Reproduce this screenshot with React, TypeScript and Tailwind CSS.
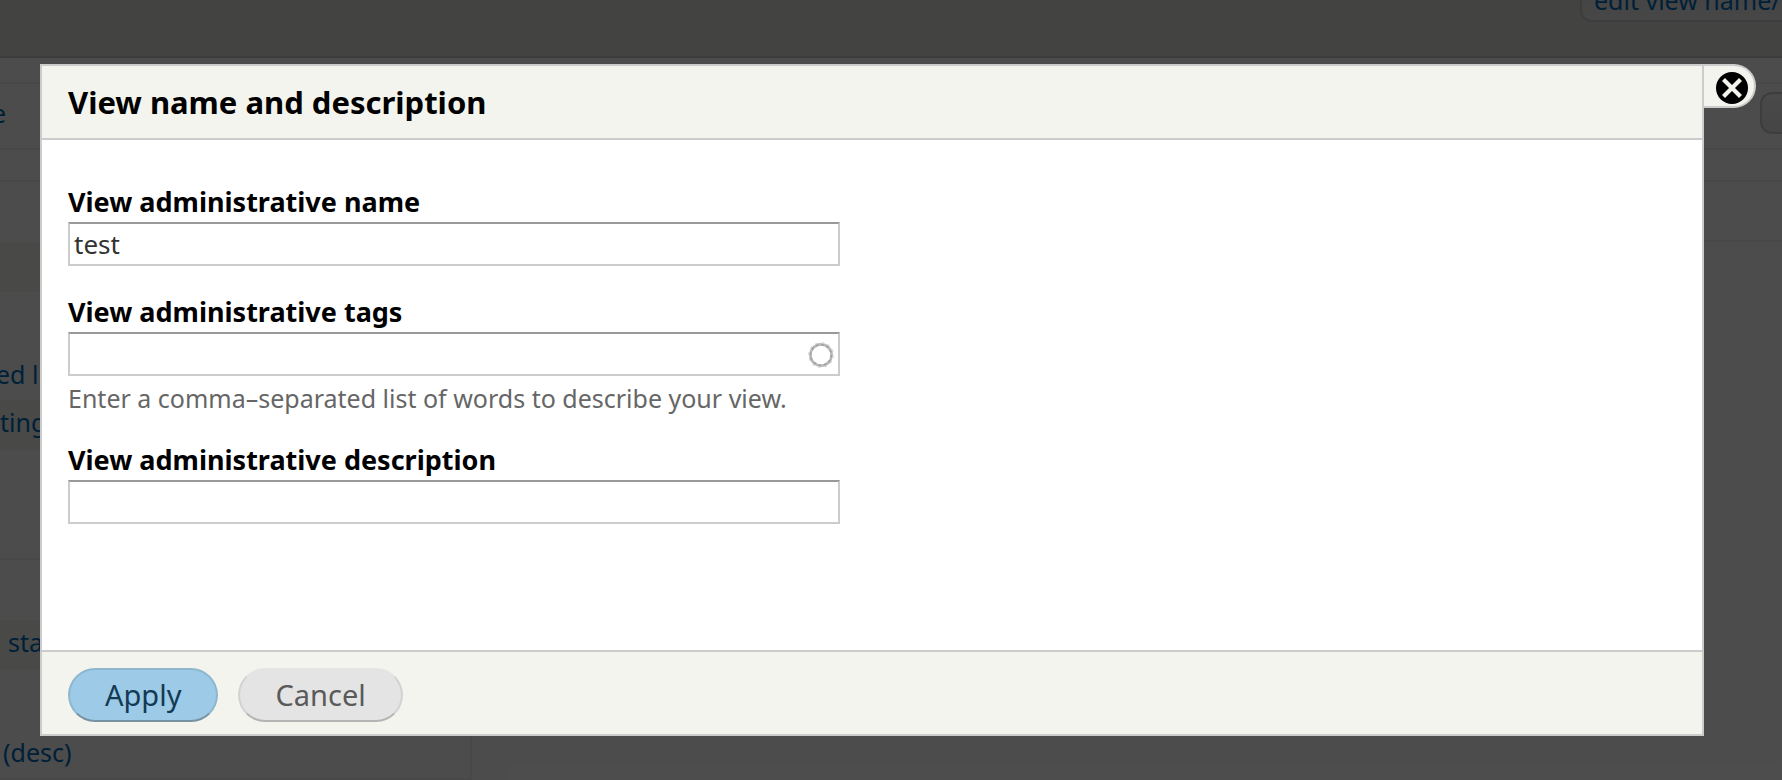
import type { ReactNode } from "react";

const inputClass =
  "block h-11 w-full border-2 border-[#ccc] border-t-[#999] bg-white px-1 text-[26px] text-[#333] outline-none";

function Field({ id, label, value, children, help }: {
  id: string;
  label: string;
  value?: string;
  children?: ReactNode;
  help?: string;
}) {
  return (
    <div className="w-full max-w-[772px]">
      <label htmlFor={id} className="mb-0.5 block text-[27px] leading-9 font-bold text-black">
        {label}
      </label>
      <div className="relative">
        <input id={id} type="text" defaultValue={value} className={inputClass} />
        {children}
      </div>
      {help && <p className="mt-1.5 text-[25px] leading-8 text-[#666]">{help}</p>}
    </div>
  );
}

function Throbber() {
  return (
    <svg viewBox="0 0 26 26" className="absolute top-2.5 right-1.5 size-[26px]" aria-hidden="true">
      <circle cx="13" cy="13" r="10.6" fill="none" stroke="#b8b8b8" strokeWidth="2.6" />
      <circle cx="13" cy="13" r="11.9" fill="none" stroke="#d0d0d0" strokeWidth="1.8" strokeDasharray="2.6 3.63" />
      <circle cx="13" cy="13" r="10.4" fill="none" stroke="#a0a0a0" strokeWidth="1.8" strokeDasharray="2.4 3.04" />
    </svg>
  );
}

function BackgroundPage() {
  return (
    <div className="min-h-screen bg-white text-[25px] leading-8 text-[#006cbd]">
      <header className="flex h-[58px] items-start justify-end border-b-2 border-[#ccc] bg-[#e0e0dc]">
        <div className="h-[22px] w-[202px] overflow-hidden rounded-bl-xl border-b-2 border-l-2 border-[#ccc] bg-linear-to-b from-[#e6e6e6] to-[#efefef] pl-3 whitespace-nowrap">
          <a href="#edit" className="-mt-4 block">edit view name/</a>
        </div>
      </header>
      <div className="h-6" />
      <div className="flex h-[68px] items-start justify-between border-y-2 border-[#f2f2f2] pt-2">
        <a href="#page" className="-ml-2 leading-[42px]">e</a>
        <div className="h-[42px] w-[22px] rounded-l-xl border-2 border-r-0 border-[#ccc] bg-linear-to-b from-[#f5f5f5] to-[#e8e8e8]" />
      </div>
      <div className="h-[30px]" />
      <div className="flex border-t-2 border-[#f2f2f2]">
        <div className="w-[472px] border-r-2 border-b-2 border-[#f2f2f2]">
          <div className="h-[60px]" />
          <div className="h-[50px] bg-[#f3f4ee]" />
          <div className="flex h-[108px] items-end pb-2.5">
            <a href="#list" className="-ml-1 whitespace-nowrap">ed li</a>
          </div>
          <div className="h-[50px] bg-[#f3f4ee] leading-[44px]">
            <a href="#settings">ting</a>
          </div>
          <div className="h-[110px] border-b-2 border-[#f2f2f2]" />
          <div className="h-[60px]" />
          <div className="h-[50px] bg-[#f3f4ee] pl-2 leading-[44px]">
            <a href="#status">sta</a>
          </div>
          <div className="flex h-[108px] items-end pb-2.5 pl-[3px]">
            <a href="#sort">(desc)</a>
          </div>
        </div>
        <div className="h-[60px] flex-1 border-b-2 border-[#f2f2f2]" />
      </div>
    </div>
  );
}

export default function App() {
  return (
    <div className="relative min-h-screen overflow-hidden font-['Noto_Sans',sans-serif]">
      <BackgroundPage />
      <div className="absolute inset-0 flex items-start bg-black/70 pt-16 pr-[26px] pl-10">
        <section
          role="dialog"
          aria-labelledby="dialog-title"
          className="min-w-0 flex-1 border-2 border-[#ccc] bg-white"
        >
          <header className="border-b-2 border-[#ccc] bg-[#f3f4ee] px-[26px]">
            <h2 id="dialog-title" className="text-[31px] leading-[72px] font-bold text-black">
              View name and description
            </h2>
          </header>
          <form>
            <div className="flex flex-col gap-7 px-[26px] pt-11 pb-[126px]">
              <Field id="name" label="View administrative name" value="test" />
              <Field
                id="tags"
                label="View administrative tags"
                help="Enter a comma–separated list of words to describe your view."
              >
                <Throbber />
              </Field>
              <Field id="description" label="View administrative description" />
            </div>
            <footer className="flex gap-5 border-t-2 border-[#ccc] bg-[#f3f4ee] px-[26px] pt-4 pb-3">
              <button
                type="button"
                className="h-[54px] rounded-full border-2 border-[#8eb7cd] border-b-[#7691a2] bg-[#9dcae7] px-[35px] text-[29px] leading-[50px] text-[#133b54]"
              >
                Apply
              </button>
              <button
                type="button"
                className="h-[54px] rounded-full border-2 border-[#d2d2d2] border-t-[#e4e4e4] border-b-[#b4b4b4] bg-[#e4e4e4] px-[35px] text-[29px] leading-[50px] text-[#5a5a5a]"
              >
                Cancel
              </button>
            </footer>
          </form>
        </section>
        <button
          type="button"
          aria-label="Close"
          className="flex h-11 w-[52px] shrink-0 items-center justify-center rounded-r-full border-2 border-l-0 border-[#ccc] bg-[#f3f4ee] pt-1 pl-1.5"
        >
          <svg viewBox="0 0 32 32" className="size-8" aria-hidden="true">
            <circle cx="16" cy="16" r="16" fill="#000" />
            <path d="M7.5 7.5 L24.5 24.5 M24.5 7.5 L7.5 24.5" stroke="#f3f4ee" strokeWidth="4.2" />
          </svg>
        </button>
      </div>
    </div>
  );
}
